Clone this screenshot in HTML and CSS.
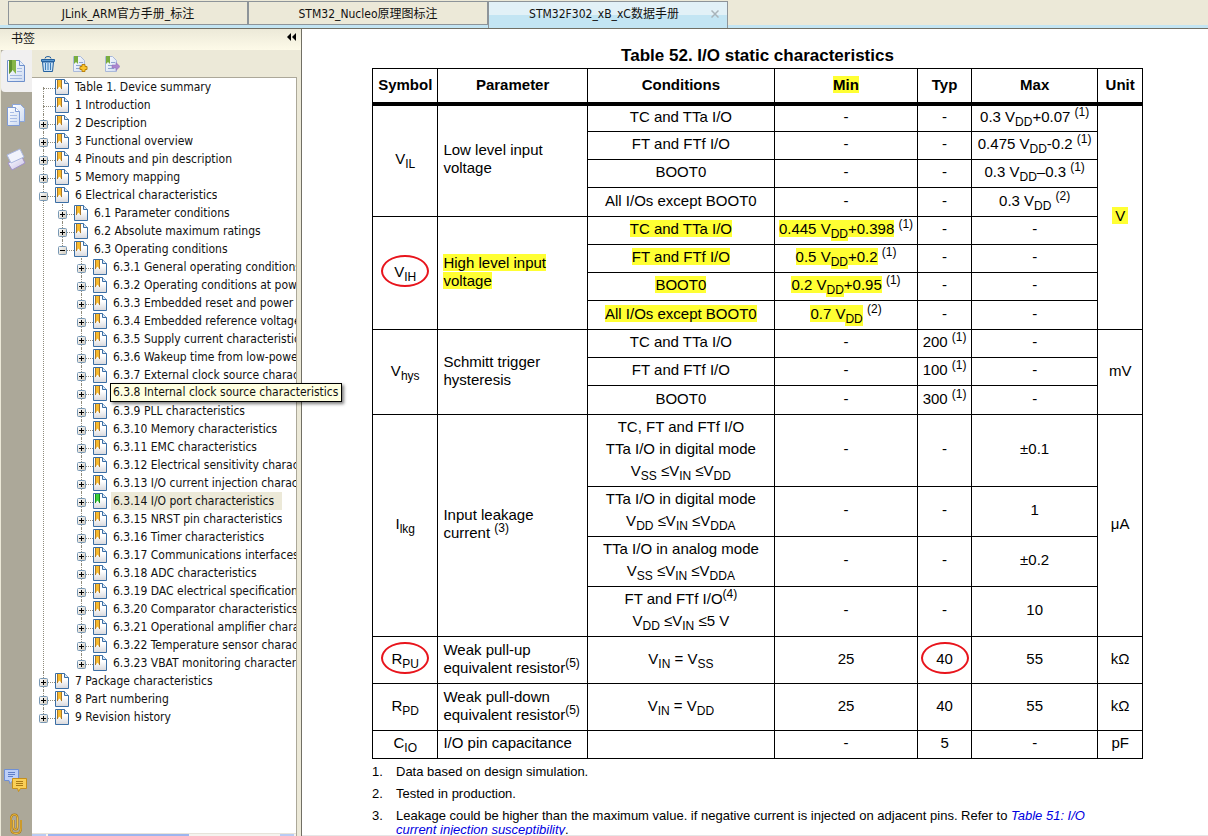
FILE: index.html
```
<!DOCTYPE html>
<html lang="zh-CN">
<head>
    <meta charset="UTF-8">
    <meta name="viewport" content="width=device-width, initial-scale=1.0">
    <title>STM32F302_xB_xC数据手册</title>
    <link rel="stylesheet" href="styles.css">
</head>
<body>
    <!-- shared icons -->
    <svg class="sprite" width="0" height="0" aria-hidden="true">
        <defs>
            <linearGradient id="paper" x1="0" y1="0" x2="1" y2="1">
                <stop offset="0" stop-color="#ffffff"/>
                <stop offset="1" stop-color="#cfdcf2"/>
            </linearGradient>
            <linearGradient id="sheet" x1="0" y1="0" x2="0" y2="1">
                <stop offset="0.4" stop-color="#ffffff"/>
                <stop offset="1" stop-color="#d8d8dc"/>
            </linearGradient>
            <linearGradient id="box" x1="0" y1="0" x2="1" y2="1">
                <stop offset="0" stop-color="#ffffff"/>
                <stop offset="1" stop-color="#cdc7ba"/>
            </linearGradient>
            <linearGradient id="lilac" x1="0" y1="0" x2="1" y2="1">
                <stop offset="0" stop-color="#ffffff"/>
                <stop offset="1" stop-color="#c6bfe6"/>
            </linearGradient>
        </defs>
        <symbol id="mark" viewBox="0 0 14 16">
            <path d="M.5.5h9l4 4v11H.5z" fill="url(#sheet)" stroke="#3a6ea5"/>
            <path d="M9.500.5v4h4" fill="#dce9f8" stroke="#3a6ea5"/>
            <path d="M2 1h5v9.500L4.500 7.500 2 10.500z" fill="#f8bb2c"/>
            <path d="M2.500 1v9M6.500 1v9" stroke="#a8762a"/>
        </symbol>
        <symbol id="mark-on" viewBox="0 0 14 16">
            <path d="M.5.5h9l4 4v11H.5z" fill="url(#sheet)" stroke="#3a6ea5"/>
            <path d="M9.500.5v4h4" fill="#dce9f8" stroke="#3a6ea5"/>
            <path d="M2 1h5v9.500L4.500 7.500 2 10.500z" fill="#3ccf3c"/>
            <path d="M2.500 1v9M6.500 1v9" stroke="#158a1c"/>
        </symbol>
        <symbol id="plus" viewBox="0 0 9 9">
            <rect x=".5" y=".5" width="8" height="8" rx="1" fill="url(#box)" stroke="#7898b5"/>
            <path d="M2 4.500h5M4.500 2v5" stroke="#000"/>
        </symbol>
        <symbol id="minus" viewBox="0 0 9 9">
            <rect x=".5" y=".5" width="8" height="8" rx="1" fill="url(#box)" stroke="#7898b5"/>
            <path d="M2 4.500h5" stroke="#000"/>
        </symbol>
    </svg>

    <div class="app">
        <nav class="tabs">
            <a class="tab" href="#jlink">JLink_ARM官方手册_标注</a>
            <a class="tab" href="#nucleo">STM32_Nucleo原理图标注</a>
            <div class="tab active">
                <a href="#datasheet">STM32F302_xB_xC数据手册</a>
                <button class="tab-close" aria-label="关闭">
                    <svg width="8" height="8" viewBox="0 0 8 8"><path d="M.5.5l7 7M7.500.5l-7 7" stroke="#a9b4ba" stroke-width="1.500"/></svg>
                </button>
            </div>
        </nav>

        <div class="workspace">
            <aside class="sidebar">
                <header class="panel-head">
                    <span>书签</span>
                    <button aria-label="折叠">
                        <svg width="9" height="8" viewBox="0 0 9 8"><path d="M4 0v8L0 4zM9 0v8L5 4z" fill="#000"/></svg>
                    </button>
                </header>

                <div class="panel-body">
                    <div class="rail">
                        <button class="rail-btn selected" aria-label="书签">
                            <svg width="20" height="24" viewBox="0 0 20 24">
                                <path d="M1.500 1.500h12l5 5v16h-17z" fill="url(#paper)" stroke="#6d8fcb"/>
                                <path d="M13.500 1.500v5h5" fill="#e4edfb" stroke="#6d8fcb"/>
                                <path d="M11 9.500h5M11 12.500h5M4 16.500h12M4 19.500h12" stroke="#a5b9df"/>
                                <path d="M3 1h7v14l-3.500-4L3 15z" fill="#86b548"/>
                                <path d="M3 1h3v11l-3 3z" fill="#5f9130"/>
                            </svg>
                        </button>
                        <button class="rail-btn" aria-label="页面">
                            <svg width="20" height="24" viewBox="0 0 20 24">
                                <path d="M6.500 1.500h8l4 4v13h-12z" fill="url(#paper)" stroke="#8ba6dc"/>
                                <path d="M1.500 4.500h8l4 4v14h-12z" fill="url(#paper)" stroke="#7f9bd5"/>
                                <path d="M9.500 4.500v4h4" fill="#fff" stroke="#7f9bd5"/>
                                <path d="M4 9.500h4M4 12.500h7M4 15.500h7M4 18.500h7" stroke="#a9bde6"/>
                            </svg>
                        </button>
                        <button class="rail-btn" aria-label="图层">
                            <svg width="20" height="24" viewBox="0 0 20 24">
                                <path d="M2 16l14-6 3 6-13 7z" fill="url(#lilac)" stroke="#a191c9"/>
                                <path d="M1 8l13-6 4 8-13 6z" fill="#f1f3fc" stroke="#a9b6df"/>
                            </svg>
                        </button>
                        <div class="rail-foot">
                            <button class="rail-btn" aria-label="注释">
                                <svg width="24" height="24" viewBox="0 0 24 24">
                                    <path d="M.5.5h14v11H9l-3 3-1-3H.5z" fill="#bccff7" stroke="#6f8fd4"/>
                                    <path d="M4 3.500h7M4 5.500h7M4 7.500h5" stroke="#5f7fc8"/>
                                    <path d="M8.500 9.500h14v10h-6l-2 3-1-3h-5z" fill="#f9cf56" stroke="#c58f1b"/>
                                    <path d="M12 12.500h7M12 14.500h7M12 16.500h7" stroke="#a97a15"/>
                                </svg>
                            </button>
                            <button class="rail-btn" aria-label="附件">
                                <svg width="14" height="22" viewBox="0 0 14 22">
                                    <path d="M4.500 7v7q0 2.500 2 2.500t2-2.500V5q0-3.500-3-3.500T2 5v10q0 5.500 5 5.500t5-5.500V7" fill="none" stroke="#a97412" stroke-width="2"/>
                                    <path d="M4.500 7v7q0 2.500 2 2.500t2-2.500V5q0-3.500-3-3.500T2 5v10q0 5.500 5 5.500t5-5.500V7" fill="none" stroke="#efc044"/>
                                </svg>
                            </button>
                        </div>
                    </div>

                    <div class="panel">
                        <div class="toolbar">
                            <button aria-label="删除书签">
                                <svg width="16" height="16" viewBox="0 0 16 16">
                                    <path d="M5 2.500Q5 .5 8 .5t3 2" fill="none" stroke="#24619f"/>
                                    <path d="M1.500 3.500h13v2h-13z" fill="#5d9bd3" stroke="#24619f"/>
                                    <path d="M2.500 6h11l-1 9.500h-9z" fill="#c7e0f5" stroke="#24619f"/>
                                    <path d="M5.500 7v7M8 7v7M10.500 7v7" stroke="#3a7dbb"/>
                                </svg>
                            </button>
                            <button aria-label="新建书签">
                                <svg width="16" height="16" viewBox="0 0 16 16">
                                    <path d="M1.500.5h7l4 4v11h-11z" fill="url(#paper)" stroke="#a9b9da"/>
                                    <path d="M7 6.500h4M4 9.500h6M4 12.500h5" stroke="#8fa5d2"/>
                                    <path d="M2 0h4v8L4 6 2 8z" fill="#79ad3f"/>
                                    <path d="M10 8.500h3v2h2v3h-2v2h-3v-2H8v-3h2z" fill="#fbc62f" stroke="#b9820f"/>
                                </svg>
                            </button>
                            <button aria-label="展开书签">
                                <svg width="16" height="16" viewBox="0 0 16 16">
                                    <path d="M1.500.5h7l4 4v11h-11z" fill="url(#paper)" stroke="#a9b9da"/>
                                    <path d="M7 6.500h4M4 9.500h4M4 12.500h6" stroke="#8fa5d2"/>
                                    <path d="M2 0h4v8L4 6 2 8z" fill="#79ad3f"/>
                                    <path d="M8 9h4V6.500l4 4-4 4V12H8z" fill="#ab86cf" stroke="#8d68b5" stroke-width=".5"/>
                                </svg>
                            </button>
                        </div>

                        <div class="tree-box">
                            <ul class="tree" id="tree"></ul>
                            <div class="hscroll"><span class="arrow"></span><span class="thumb"></span><span class="arrow end"></span></div>
                        </div>
                    </div>
                </div>
            </aside>

            <main class="page">
                <table class="spec">
                    <caption>Table 52. I/O static characteristics</caption>
                    <colgroup>
                        <col class="c-symbol"><col class="c-param"><col class="c-cond"><col class="c-min"><col class="c-typ"><col class="c-max"><col class="c-unit">
                    </colgroup>
                    <thead>
                        <tr><th>Symbol</th><th>Parameter</th><th>Conditions</th><th><mark>Min</mark></th><th>Typ</th><th>Max</th><th>Unit</th></tr>
                    </thead>
                    <tbody>
                        <tr>
                            <td rowspan="4">V<sub>IL</sub></td>
                            <td rowspan="4" class="param">Low level input<br>voltage</td>
                            <td>TC and TTa I/O</td><td>-</td><td>-</td><td>0.3 V<sub>DD</sub>+0.07 <sup>(1)</sup></td>
                            <td rowspan="8"><mark class="wide">V</mark></td>
                        </tr>
                        <tr><td>FT and FTf I/O</td><td>-</td><td>-</td><td>0.475 V<sub>DD</sub>-0.2 <sup>(1)</sup></td></tr>
                        <tr><td>BOOT0</td><td>-</td><td>-</td><td>0.3 V<sub>DD</sub>–0.3 <sup>(1)</sup></td></tr>
                        <tr class="last"><td>All I/Os except BOOT0</td><td>-</td><td>-</td><td>0.3 V<sub>DD</sub> <sup>(2)</sup></td></tr>

                        <tr>
                            <td rowspan="4"><span class="circled">V<sub>IH</sub></span></td>
                            <td rowspan="4" class="param"><mark>High level input<br>voltage</mark></td>
                            <td><mark>TC and TTa I/O</mark></td><td><mark>0.445 V<sub>DD</sub>+0.398</mark> <sup>(1)</sup></td><td>-</td><td>-</td>
                        </tr>
                        <tr><td><mark>FT and FTf I/O</mark></td><td><mark>0.5 V<sub>DD</sub>+0.2</mark> <sup>(1)</sup></td><td>-</td><td>-</td></tr>
                        <tr><td><mark>BOOT0</mark></td><td><mark>0.2 V<sub>DD</sub>+0.95</mark> <sup>(1)</sup></td><td>-</td><td>-</td></tr>
                        <tr class="last"><td><mark>All I/Os except BOOT0</mark></td><td><mark>0.7 V<sub>DD</sub></mark> <sup>(2)</sup></td><td>-</td><td>-</td></tr>

                        <tr>
                            <td rowspan="3">V<sub>hys</sub></td>
                            <td rowspan="3" class="param">Schmitt trigger<br>hysteresis</td>
                            <td>TC and TTa I/O</td><td>-</td><td>200 <sup>(1)</sup></td><td>-</td>
                            <td rowspan="3">mV</td>
                        </tr>
                        <tr><td>FT and FTf I/O</td><td>-</td><td>100 <sup>(1)</sup></td><td>-</td></tr>
                        <tr class="last"><td>BOOT0</td><td>-</td><td>300 <sup>(1)</sup></td><td>-</td></tr>

                        <tr>
                            <td rowspan="4">I<sub>lkg</sub></td>
                            <td rowspan="4" class="param">Input leakage<br>current <sup>(3)</sup></td>
                            <td class="lines">TC, FT and FTf I/O<br>TTa I/O in digital mode<br>V<sub>SS</sub> ≤V<sub>IN</sub> ≤V<sub>DD</sub></td><td>-</td><td>-</td><td>±0.1</td>
                            <td rowspan="4">μA</td>
                        </tr>
                        <tr><td class="lines">TTa I/O in digital mode<br>V<sub>DD</sub> ≤V<sub>IN</sub> ≤V<sub>DDA</sub></td><td>-</td><td>-</td><td>1</td></tr>
                        <tr><td class="lines">TTa I/O in analog mode<br>V<sub>SS</sub> ≤V<sub>IN</sub> ≤V<sub>DDA</sub></td><td>-</td><td>-</td><td>±0.2</td></tr>
                        <tr><td class="lines">FT and FTf I/O<sup>(4)</sup><br>V<sub>DD</sub> ≤V<sub>IN</sub> ≤5 V</td><td>-</td><td>-</td><td>10</td></tr>

                        <tr class="tall">
                            <td><span class="circled">R<sub>PU</sub></span></td>
                            <td class="param">Weak pull-up<br>equivalent resistor<sup>(5)</sup></td>
                            <td>V<sub>IN</sub> = V<sub>SS</sub></td><td>25</td><td><span class="circled">40</span></td><td>55</td><td>kΩ</td>
                        </tr>
                        <tr class="tall">
                            <td>R<sub>PD</sub></td>
                            <td class="param">Weak pull-down<br>equivalent resistor<sup>(5)</sup></td>
                            <td>V<sub>IN</sub> = V<sub>DD</sub></td><td>25</td><td>40</td><td>55</td><td>kΩ</td>
                        </tr>
                        <tr><td>C<sub>IO</sub></td><td class="param">I/O pin capacitance</td><td></td><td>-</td><td>5</td><td>-</td><td>pF</td></tr>
                    </tbody>
                </table>

                <ol class="notes">
                    <li>Data based on design simulation.</li>
                    <li>Tested in production.</li>
                    <li>Leakage could be higher than the maximum value. if negative current is injected on adjacent pins. Refer to <a href="#table51">Table 51: I/O<br>current injection susceptibility</a>.</li>
                </ol>
            </main>
        </div>
    </div>

    <script src="tree.js"></script>
</body>
</html>
```
FILE: styles.css
```
* {
    margin: 0;
    padding: 0;
    box-sizing: border-box;
}

body {
    font-family: "DejaVu Sans Condensed", "Noto Sans", "Noto Sans CJK SC", sans-serif;
    font-size: 12px;
    color: #111;
    background: #ece9d8;
}

button {
    display: flex;
    border: 0;
    background: none;
    font: inherit;
}

a {
    color: inherit;
    text-decoration: none;
}

.sprite {
    position: absolute;
}

.app {
    display: flex;
    flex-direction: column;
    height: 100vh;
    overflow: hidden;
}

/* document tabs */
.tabs {
    display: flex;
    flex: none;
    height: 29px;
    padding: 1px 0 0 8px;
    border-bottom: 1px solid #716f64;
    background: linear-gradient(#ece9d8 25px, #c3e5f3 25px);
}

.tab {
    display: flex;
    align-items: center;
    justify-content: center;
    flex: 0 1 240px;
    height: 24px;
    padding-bottom: 2px;
    border: 1px solid #8d9499;
    white-space: nowrap;
}

.tab.active {
    position: relative;
    height: 27px;
    padding: 0 8px 6px 0;
    border-bottom: 0;
    background: linear-gradient(#e2f1f7 13px, #c3e5f3 13px);
}

.tab-close {
    position: absolute;
    right: 8px;
    top: 8px;
}

.workspace {
    display: flex;
    flex: 1;
    min-height: 0;
}

/* bookmark panel */
.sidebar {
    display: flex;
    flex-direction: column;
    flex: 0 0 25%;
    min-width: 0;
    border-right: 1px solid #716f64;
}

.panel-head {
    display: flex;
    justify-content: space-between;
    align-items: center;
    height: 21px;
    padding: 0 5px 5px 11px;
    background: linear-gradient(#ece9d8, #fdfae8);
}

.panel-body {
    display: flex;
    flex: 1;
    min-height: 0;
}

.rail {
    display: flex;
    flex-direction: column;
    flex: 0 0 32px;
    gap: 2px;
    border-left: 1px solid #ece9d8;
    background: #aca899;
}

.rail-btn {
    align-items: center;
    justify-content: center;
    width: 100%;
    height: 42px;
    padding-right: 2px;
}

.rail-btn.selected {
    border-radius: 4px 0 0 4px;
    background: #f1f0f0;
}

.rail-foot {
    display: flex;
    flex-direction: column;
    gap: 20px;
    margin: auto 0 1px;
}

.rail-foot .rail-btn {
    height: auto;
}

.panel {
    display: flex;
    flex-direction: column;
    flex: 1;
    min-width: 0;
    padding-right: 4px;
}

.toolbar {
    display: flex;
    gap: 16px;
    height: 27px;
    padding: 6px 8px;
}

.tree-box {
    display: flex;
    flex-direction: column;
    justify-content: space-between;
    flex: 1;
    min-height: 0;
    border: 1px solid #aca899;
    border-left: 0;
    border-bottom: 0;
    background: #fff;
}

.tree {
    padding-left: 7px;
    list-style: none;
}

.tree ul {
    padding-left: 19px;
    list-style: none;
}

.tree li {
    position: relative;
}

/* dotted guide lines */
.tree li::before {
    content: "";
    position: absolute;
    left: 4px;
    top: 0;
    bottom: 0;
    border-left: 1px dotted #8f8b7c;
}

.tree > li:first-child::before {
    top: 9px;
}

.tree li:last-child::before {
    bottom: auto;
    height: 10px;
}

.row {
    display: flex;
    align-items: center;
    position: relative;
    height: 18px;
}

.row::before {
    content: "";
    position: absolute;
    left: 4px;
    top: 10px;
    width: 12px;
    border-top: 1px dotted #8f8b7c;
}

.toggle {
    position: relative;
    flex: none;
    width: 9px;
    margin-top: 3px;
}

.row .icon {
    flex: none;
    margin: 0 4px 0 7px;
}

.row.leaf .icon {
    margin-left: 16px;
}

.row a {
    min-width: 0;
    padding-left: 2px;
    overflow: hidden;
    line-height: 18px;
    white-space: nowrap;
}

.row.current a {
    padding-right: 8px;
    background: #ece9d8;
}

.row .tooltip {
    position: absolute;
    left: 33px;
    bottom: 0;
    z-index: 2;
    padding: 0 3px 0 2px;
    border: 1px solid #000;
    background: #ffffe1;
    box-shadow: 2px 2px 3px rgba(0, 0, 0, 0.5);
    line-height: 17px;
}

.hscroll {
    display: flex;
    gap: 2px;
    height: 3px;
    padding-right: 2px;
    border-top: 1px solid #e6e3da;
    background: #f4f3ee;
}

.hscroll .arrow {
    width: 14px;
    background: #b9cbf3;
}

.hscroll .thumb {
    width: 54%;
    background: #9db5ee;
}

.hscroll .end {
    margin-left: auto;
}

/* datasheet page */
.page {
    flex: 1;
    min-width: 0;
    overflow: hidden;
    padding: 16px 65px 0 70px;
    border-bottom: 1px solid #e6e6e6;
    background: #fff;
    color: #000;
    font-family: "Liberation Sans", Arial, sans-serif;
    font-size: 15px;
}

.spec {
    width: 100%;
    table-layout: fixed;
    border-collapse: collapse;
    text-align: center;
    line-height: 18px;
}

.spec caption {
    padding-bottom: 2px;
    font-size: 17px;
    font-weight: bold;
    line-height: 21px;
}

.c-symbol { width: 8.5%; }
.c-param { width: 19.4%; }
.c-cond { width: 24.3%; }
.c-min { width: 18.6%; }
.c-typ { width: 7%; }
.c-max { width: 16.4%; }
.c-unit { width: 5.8%; }

.spec th,
.spec td {
    height: 28px;
    border: 1px solid #000;
    white-space: nowrap;
}

.spec td {
    padding-bottom: 3px;
}

.spec th {
    height: 35px;
    border-bottom-width: 4px;
}

.spec .last td {
    height: 29px;
}

.spec .tall td {
    height: 47px;
}

.spec .param {
    padding: 0 5px 3px;
    text-align: left;
}

.spec .lines {
    padding: 1px 0 4px;
    line-height: 22px;
}

sub,
sup {
    font-size: 12px;
    line-height: 0;
}

mark,
mark sub {
    background: #ffff33;
}

mark.wide {
    padding: 0 3px;
}

.circled {
    position: relative;
}

.circled::after {
    content: "";
    position: absolute;
    left: 50%;
    top: 50%;
    width: 44px;
    height: 28px;
    border: 2px solid #e8141c;
    border-radius: 50%;
    transform: translate(-50%, -50%);
}

.notes {
    padding: 6px 0 0 24px;
    font-size: 13px;
    line-height: 14px;
    list-style: none;
    counter-reset: note;
}

.notes li {
    margin-bottom: 8px;
    counter-increment: note;
}

.notes li::before {
    content: counter(note) ".";
    float: left;
    width: 24px;
    margin-left: -24px;
}

.notes a {
    color: #0000e0;
    font-style: italic;
}
```
FILE: tree.js
```
const bookmarks = [
    { title: "Table 1. Device summary", leaf: true },
    { title: "1 Introduction", leaf: true },
    { title: "2 Description" },
    { title: "3 Functional overview" },
    { title: "4 Pinouts and pin description" },
    { title: "5 Memory mapping" },
    { title: "6 Electrical characteristics", children: [
        { title: "6.1 Parameter conditions" },
        { title: "6.2 Absolute maximum ratings" },
        { title: "6.3 Operating conditions", children: [
            { title: "6.3.1 General operating conditions" },
            { title: "6.3.2 Operating conditions at power-up" },
            { title: "6.3.3 Embedded reset and power control" },
            { title: "6.3.4 Embedded reference voltage" },
            { title: "6.3.5 Supply current characteristics" },
            { title: "6.3.6 Wakeup time from low-power mode" },
            { title: "6.3.7 External clock source characteristics" },
            { title: "6.3.8 Internal clock source characteristics", tip: true },
            { title: "6.3.9 PLL characteristics" },
            { title: "6.3.10 Memory characteristics" },
            { title: "6.3.11 EMC characteristics" },
            { title: "6.3.12 Electrical sensitivity characteristics" },
            { title: "6.3.13 I/O current injection characteristics" },
            { title: "6.3.14 I/O port characteristics", current: true },
            { title: "6.3.15 NRST pin characteristics" },
            { title: "6.3.16 Timer characteristics" },
            { title: "6.3.17 Communications interfaces" },
            { title: "6.3.18 ADC characteristics" },
            { title: "6.3.19 DAC electrical specifications" },
            { title: "6.3.20 Comparator characteristics" },
            { title: "6.3.21 Operational amplifier characteristics" },
            { title: "6.3.22 Temperature sensor characteristics" },
            { title: "6.3.23 VBAT monitoring characteristics" }
        ] }
    ] },
    { title: "7 Package characteristics" },
    { title: "8 Part numbering" },
    { title: "9 Revision history" }
];

function renderItem(item) {
    const icon = item.current ? "mark-on" : "mark";
    const sign = item.children ? "minus" : "plus";
    const toggle = item.leaf ? "" :
        `<button class="toggle" aria-label="${item.title}"><svg width="9" height="9"><use href="#${sign}"/></svg></button>`;
    // the hovered item shows its full title in a tooltip
    const label = item.tip ?
        `<a class="tooltip" href="#">${item.title}</a>` :
        `<a href="#">${item.title}</a>`;
    const children = item.children ? `<ul>${item.children.map(renderItem).join("")}</ul>` : "";
    return `<li>
        <div class="row${item.leaf ? " leaf" : ""}${item.current ? " current" : ""}">
            ${toggle}<svg class="icon" width="14" height="16"><use href="#${icon}"/></svg>${label}
        </div>${children}
    </li>`;
}

document.getElementById("tree").innerHTML = bookmarks.map(renderItem).join("");
```
